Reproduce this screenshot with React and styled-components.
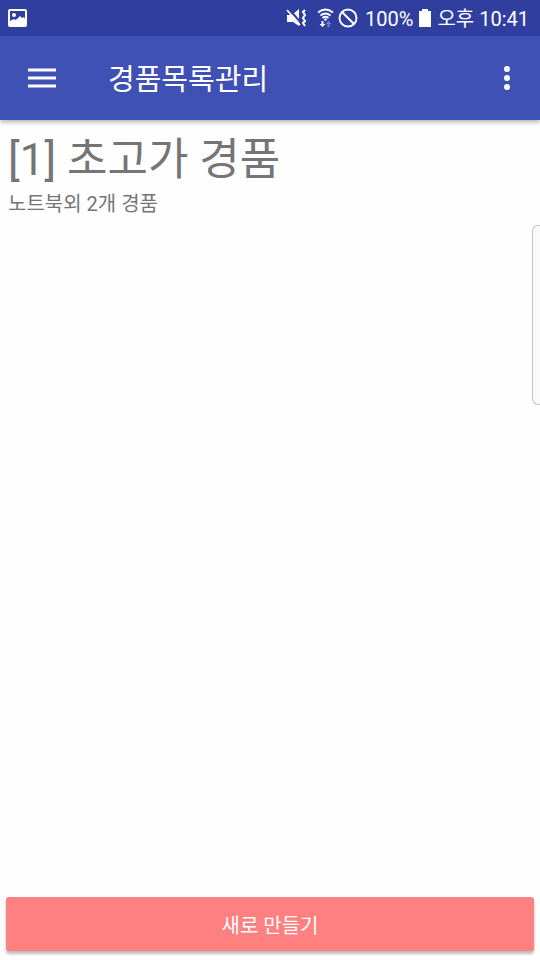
import styled, { createGlobalStyle } from 'styled-components';

const GlobalStyle = createGlobalStyle`
  * {
    box-sizing: border-box;
  }

  body {
    margin: 0;
    background: #fefefe;
    font-family: Roboto, 'Noto Sans CJK KR', sans-serif;
  }

  button {
    font-family: inherit;
  }
`;

const Screen = styled.div`
  position: relative;
  display: flex;
  flex-direction: column;
  min-height: 100vh;
`;

const StatusBar = styled.div`
  display: flex;
  align-items: center;
  justify-content: space-between;
  height: 36px;
  padding: 0 11px 0 8px;
  background: #303f9f;
  color: #fff;

  svg {
    display: block;
  }
`;

const StatusGroup = styled.div`
  display: flex;
  align-items: center;
  gap: ${({ $gap }) => $gap}px;
`;

const StatusText = styled.span`
  padding-top: 2px;
  font-size: 20px;
  line-height: 28px;
`;

const Toolbar = styled.header`
  display: flex;
  align-items: center;
  height: 84px;
  padding: 0 9px 0 18px;
  background: #3f51b5;
  color: #fff;
  box-shadow: 0 2px 5px rgba(0, 0, 0, 0.32);
`;

const IconButton = styled.button`
  display: grid;
  place-items: center;
  width: 48px;
  height: 48px;
  padding: 0;
  border: 0;
  background: none;
  color: inherit;
  cursor: pointer;
`;

const Title = styled.h1`
  flex: 1;
  margin: 0;
  padding: 4px 0 0 42px;
  font-size: 29px;
  font-weight: 400;
  line-height: 40px;
`;

const PrizeList = styled.ul`
  flex: 1;
  margin: 0;
  padding: 10px 8px;
  list-style: none;
  color: #757575;
`;

const PrizeName = styled.h2`
  margin: 0;
  font-size: 44px;
  font-weight: 400;
  line-height: 60px;
`;

const PrizeSummary = styled.p`
  margin: 0;
  font-size: 20px;
  line-height: 28px;
`;

const EdgeHandle = styled.div`
  position: absolute;
  top: 225px;
  right: 0;
  width: 8px;
  height: 180px;
  border: 1px solid #c4c4c4;
  border-right: 0;
  border-radius: 6px 0 0 6px;
  background: #fafafa;
`;

const Footer = styled.footer`
  display: flex;
  padding: 0 6px 9px;
`;

const CreateButton = styled.button`
  flex: 1;
  height: 54px;
  border: 0;
  border-radius: 3px;
  background: #ff8080;
  color: #fff;
  font-size: 20px;
  box-shadow: 0 3px 3px rgba(0, 0, 0, 0.26);
  cursor: pointer;
`;

const PictureIcon = () => (
  <svg width="19" height="18" viewBox="0 0 19 18" aria-hidden="true">
    <rect x="1" y="1" width="17" height="16" rx="1" fill="none" stroke="#fff" strokeWidth="2" />
    <circle cx="6" cy="6" r="2" fill="#fff" />
    <path d="M2 12l2-1 2-1 1 1 2-1 3-3 2 2 2-1 1 2v6H2z" fill="#fff" />
  </svg>
);

const MuteIcon = () => (
  <svg width="21" height="20" viewBox="0 0 21 20" aria-hidden="true">
    <path d="M1 7h5l7-6v17l-6-4H1z" fill="#fff" />
    <path d="M3 1l12 14" stroke="#303f9f" strokeWidth="2" />
    <path d="M1 2l13 15" stroke="#fff" strokeWidth="1.7" />
    <path
      d="M19 2l-2 2 2 3-2 3 2 3-2 2 2 3"
      fill="none"
      stroke="#fff"
      strokeWidth="2"
    />
  </svg>
);

const WifiIcon = () => (
  <svg width="17" height="20" viewBox="0 0 17 20" aria-hidden="true">
    <g fill="none" stroke="#fff" strokeWidth="1.7">
      <path d="M1 4.500Q8.500-1.500 16 4.500" />
      <path d="M3.500 7.500q5-4 10 0" />
      <path d="M5.500 10q3-2.500 6 0" />
    </g>
    <circle cx="8.500" cy="11.500" r="1.300" fill="#fff" />
    <path d="M4.500 13h2v3h2l-3 3-3-3h2z" fill="#fff" />
    <path d="M10.500 19h2v-3h2l-3-3-3 3h2z" fill="#7781c2" />
  </svg>
);

const BlockedIcon = () => (
  <svg width="20" height="20" viewBox="0 0 20 20" aria-hidden="true">
    <g fill="none" stroke="#fff" strokeWidth="1.9">
      <circle cx="10" cy="10" r="8.500" />
      <path d="M4 4l12 12" />
    </g>
  </svg>
);

const BatteryIcon = () => (
  <svg width="12" height="18" viewBox="0 0 12 18" aria-hidden="true">
    <path d="M3 0h6v2h3v16H0V2h3z" fill="#fff" />
  </svg>
);

const MenuIcon = () => (
  <svg width="28" height="20" viewBox="0 0 28 20" aria-hidden="true">
    <path d="M0 2h28M0 10h28M0 18h28" stroke="currentColor" strokeWidth="3" />
  </svg>
);

const MoreIcon = () => (
  <svg width="6" height="26" viewBox="0 0 6 26" fill="currentColor" aria-hidden="true">
    <circle cx="3" cy="4" r="3" />
    <circle cx="3" cy="13" r="3" />
    <circle cx="3" cy="22" r="3" />
  </svg>
);

const prizes = [{ id: 1, name: '초고가 경품', summary: '노트북외 2개 경품' }];

export default function App() {
  return (
    <>
      <GlobalStyle />
      <Screen>
        <StatusBar>
          <PictureIcon />
          <StatusGroup $gap={7}>
            <StatusGroup $gap={10}>
              <MuteIcon />
              <StatusGroup $gap={4}>
                <WifiIcon />
                <BlockedIcon />
              </StatusGroup>
            </StatusGroup>
            <StatusGroup $gap={6}>
              <StatusText>100%</StatusText>
              <BatteryIcon />
              <StatusText>오후 10:41</StatusText>
            </StatusGroup>
          </StatusGroup>
        </StatusBar>
        <Toolbar>
          <IconButton type="button" aria-label="메뉴">
            <MenuIcon />
          </IconButton>
          <Title>경품목록관리</Title>
          <IconButton type="button" aria-label="더보기">
            <MoreIcon />
          </IconButton>
        </Toolbar>
        <PrizeList>
          {prizes.map(({ id, name, summary }) => (
            <li key={id}>
              <PrizeName>
                [{id}] {name}
              </PrizeName>
              <PrizeSummary>{summary}</PrizeSummary>
            </li>
          ))}
        </PrizeList>
        <Footer>
          <CreateButton type="button">새로 만들기</CreateButton>
        </Footer>
        <EdgeHandle />
      </Screen>
    </>
  );
}
